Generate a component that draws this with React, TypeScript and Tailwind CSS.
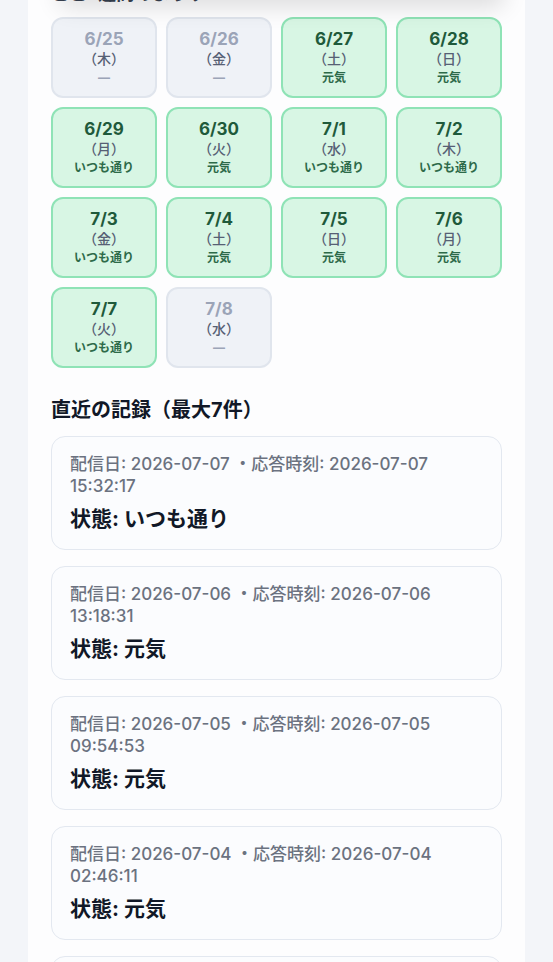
import React from 'react';

type Day = { date: string; wd: string; status: string | null };

const days: Day[] = [
  { date: '6/25', wd: '木', status: null },
  { date: '6/26', wd: '金', status: null },
  { date: '6/27', wd: '土', status: '元気' },
  { date: '6/28', wd: '日', status: '元気' },
  { date: '6/29', wd: '月', status: 'いつも通り' },
  { date: '6/30', wd: '火', status: '元気' },
  { date: '7/1', wd: '水', status: 'いつも通り' },
  { date: '7/2', wd: '木', status: 'いつも通り' },
  { date: '7/3', wd: '金', status: 'いつも通り' },
  { date: '7/4', wd: '土', status: '元気' },
  { date: '7/5', wd: '日', status: '元気' },
  { date: '7/6', wd: '月', status: '元気' },
  { date: '7/7', wd: '火', status: 'いつも通り' },
  { date: '7/8', wd: '水', status: null },
];

const records = [
  { sent: '2026-07-07', answered: '2026-07-07 15:32:17', status: 'いつも通り' },
  { sent: '2026-07-06', answered: '2026-07-06 13:18:31', status: '元気' },
  { sent: '2026-07-05', answered: '2026-07-05 09:54:53', status: '元気' },
  { sent: '2026-07-04', answered: '2026-07-04 02:46:11', status: '元気' },
  { sent: '2026-07-03', answered: '2026-07-03 18:05:42', status: 'いつも通り' },
];

function DayCell({ day }: { day: Day }) {
  const ok = day.status !== null;
  return (
    <div
      className={`h-[81px] rounded-[12px] border-2 flex flex-col items-center justify-center ${
        ok ? 'bg-[#d8f6e4] border-[#8fe3b6]' : 'bg-[#eff2f7] border-[#e0e5ed]'
      }`}
    >
      <div className={`text-[17px] leading-[20px] font-bold ${ok ? 'text-[#1f5a3b]' : 'text-[#9ba4b7]'}`}>
        {day.date}
      </div>
      <div className="text-[14px] leading-[19px] font-medium text-[#566074]">（{day.wd}）</div>
      <div className={`text-[12px] leading-[19px] font-bold ${ok ? 'text-[#2d6a49]' : 'text-[#9ba4b7]'}`}>
        {day.status ?? '—'}
      </div>
    </div>
  );
}

export default function App() {
  return (
    <div className="min-h-screen bg-[#f3f5f9] px-7 font-['Inter','Noto_Sans_CJK_JP',sans-serif] overflow-hidden">
      {/* header shadow peeking in from above */}
      <div className="fixed top-[-30px] left-[60px] right-[50px] h-[30px] bg-white shadow-[0_6px_24px_rgba(0,0,0,0.14)] z-10" />

      <div className="bg-[#fdfdfe] px-[23px] -mt-[20px] pb-10">
        <h2 className="text-[18px] leading-[28px] font-bold text-[#374151] mb-[9px]">ここ2週間のようす</h2>

        <div className="grid grid-cols-4 gap-[9px]">
          {days.map((d) => (
            <DayCell key={d.date} day={d} />
          ))}
        </div>

        <h2 className="mt-7 mb-3 text-[20px] leading-[28px] font-bold text-[#111827]">直近の記録（最大7件）</h2>

        <div className="flex flex-col gap-4">
          {records.map((r) => (
            <div
              key={r.sent}
              className="bg-[#fbfcfe] border border-[#e3e8f0] rounded-[14px] px-[18px] pt-[16px] pb-[16px]"
            >
              <p className="text-[17px] leading-[22px] font-medium text-[#6b7280]">
                配信日: {r.sent} ・応答時刻: {r.answered}
              </p>
              <p className="mt-[8px] text-[21px] leading-[28px] font-bold text-[#111827]">状態: {r.status}</p>
            </div>
          ))}
        </div>
      </div>
    </div>
  );
}
